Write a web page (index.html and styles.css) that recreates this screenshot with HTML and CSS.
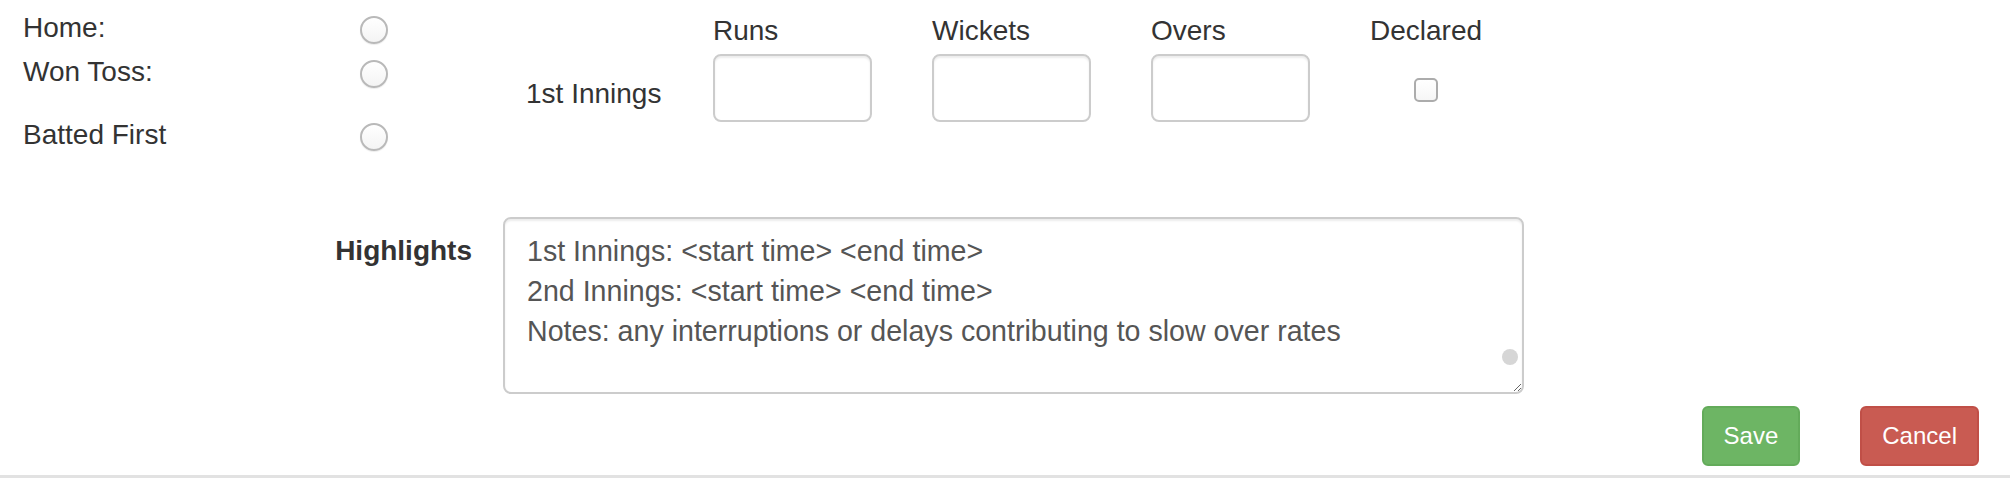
FILE: index.html
```html
<!DOCTYPE html>
<html lang="en">

<head>
    <meta charset="UTF-8">
    <meta name="viewport" content="width=device-width, initial-scale=1.0">
    <title>Match Result</title>
    <link rel="stylesheet" href="styles.css">
</head>

<body>
    <form class="match-form">
        <div class="top-section">
            <div class="toss-block">
                <div class="toss-row">
                    <label class="toss-label">Home:</label>
                    <input type="radio" class="radio" name="home">
                </div>
                <div class="toss-row">
                    <label class="toss-label">Won Toss:</label>
                    <input type="radio" class="radio" name="toss">
                </div>
                <div class="toss-row batted">
                    <label class="toss-label">Batted First</label>
                    <input type="radio" class="radio" name="batted">
                </div>
            </div>

            <div class="innings-label">1st Innings</div>

            <div class="score-cols">
                <div class="score-col">
                    <label class="col-head">Runs</label>
                    <input type="text" class="form-control">
                </div>
                <div class="score-col">
                    <label class="col-head">Wickets</label>
                    <input type="text" class="form-control">
                </div>
                <div class="score-col">
                    <label class="col-head">Overs</label>
                    <input type="text" class="form-control">
                </div>
                <div class="score-col declared">
                    <label class="col-head">Declared</label>
                    <input type="checkbox" class="checkbox">
                </div>
            </div>
        </div>

        <div class="highlights-row">
            <label class="highlights-label">Highlights</label>
            <div class="textarea-wrap">
                <textarea class="form-control highlights">1st Innings: &lt;start time&gt; &lt;end time&gt;
2nd Innings: &lt;start time&gt; &lt;end time&gt;
Notes: any interruptions or delays contributing to slow over rates</textarea>
                <span class="scroll-thumb"></span>
            </div>
        </div>

        <div class="button-row">
            <button type="button" class="btn btn-success">Save</button>
            <button type="button" class="btn btn-danger">Cancel</button>
        </div>
    </form>
    <div class="page-footer"></div>
</body>

</html>
```

FILE: styles.css
```css
body {
    margin: 0;
    background-color: #ffffff;
    color: #333333;
    font-family: 'Liberation Sans', Arial, Helvetica, sans-serif;
    font-size: 28px;
    line-height: 40px;
}

.top-section {
    display: flex;
    align-items: flex-start;
    padding-left: 23px;
}

/* toss / home radios */
.toss-block {
    width: 503px;
    padding-top: 8px;
}

.toss-row {
    display: flex;
    align-items: center;
    height: 40px;
    margin-bottom: 4px;
}

.toss-row.batted {
    margin-top: 23px;
    margin-bottom: 0;
}

.toss-label {
    width: 337px;
}

.radio {
    appearance: none;
    -webkit-appearance: none;
    width: 28px;
    height: 28px;
    margin: 3px 0 0 0;
    border: 2px solid #b9b9b9;
    border-radius: 50%;
    background: linear-gradient(#ffffff, #f4f4f4);
    box-shadow: 0 1px 1px rgba(0, 0, 0, 0.08);
    box-sizing: border-box;
}

.innings-label {
    width: 187px;
    padding-top: 74px;
}

/* runs / wickets / overs / declared */
.score-cols {
    display: flex;
    gap: 60px;
    padding-top: 11px;
}

.score-col {
    display: flex;
    flex-direction: column;
    width: 159px;
}

.score-col.declared {
    width: auto;
    align-items: center;
}

.col-head {
    height: 40px;
}

.form-control {
    box-sizing: border-box;
    border: 2px solid #cccccc;
    border-radius: 8px;
    box-shadow: inset 0 2px 2px rgba(0, 0, 0, 0.075);
    background-color: #ffffff;
    font-family: inherit;
    font-size: 28px;
    line-height: 40px;
    color: #555555;
}

.score-col .form-control {
    width: 159px;
    height: 68px;
    margin-top: 3px;
}

.checkbox {
    appearance: none;
    -webkit-appearance: none;
    width: 24px;
    height: 24px;
    margin: 27px 0 0 0;
    border: 2px solid #acacac;
    border-radius: 5px;
    background: linear-gradient(#ffffff, #f6f6f6);
    box-sizing: border-box;
}

/* highlights */
.highlights-row {
    display: flex;
    align-items: flex-start;
    margin-top: 62px;
}

.highlights-label {
    width: 472px;
    margin-right: 31px;
    padding-top: 14px;
    text-align: right;
    font-weight: 700;
}

.textarea-wrap {
    position: relative;
}

.highlights {
    display: block;
    width: 1021px;
    height: 177px;
    padding: 12px 22px;
    margin: 0;
    font-size: 28.6px;
}

.scroll-thumb {
    position: absolute;
    left: 999px;
    top: 132px;
    width: 16px;
    height: 16px;
    border-radius: 50%;
    background-color: #d6d6d6;
}

/* buttons */
.button-row {
    display: flex;
    justify-content: flex-end;
    gap: 60px;
    margin-top: 12px;
    padding-right: 31px;
}

.btn {
    box-sizing: border-box;
    height: 60px;
    padding: 10px 20px;
    border: 2px solid transparent;
    border-radius: 6px;
    color: #ffffff;
    font-family: inherit;
    font-size: 24px;
    line-height: 36px;
    cursor: pointer;
}

.btn-success {
    background-color: #6db564;
    border-color: #63ab5a;
}

.btn-danger {
    background-color: #c95b52;
    border-color: #c04f47;
}

.page-footer {
    margin-top: 9px;
    height: 20px;
    background-color: #e2e2e2;
}
```
